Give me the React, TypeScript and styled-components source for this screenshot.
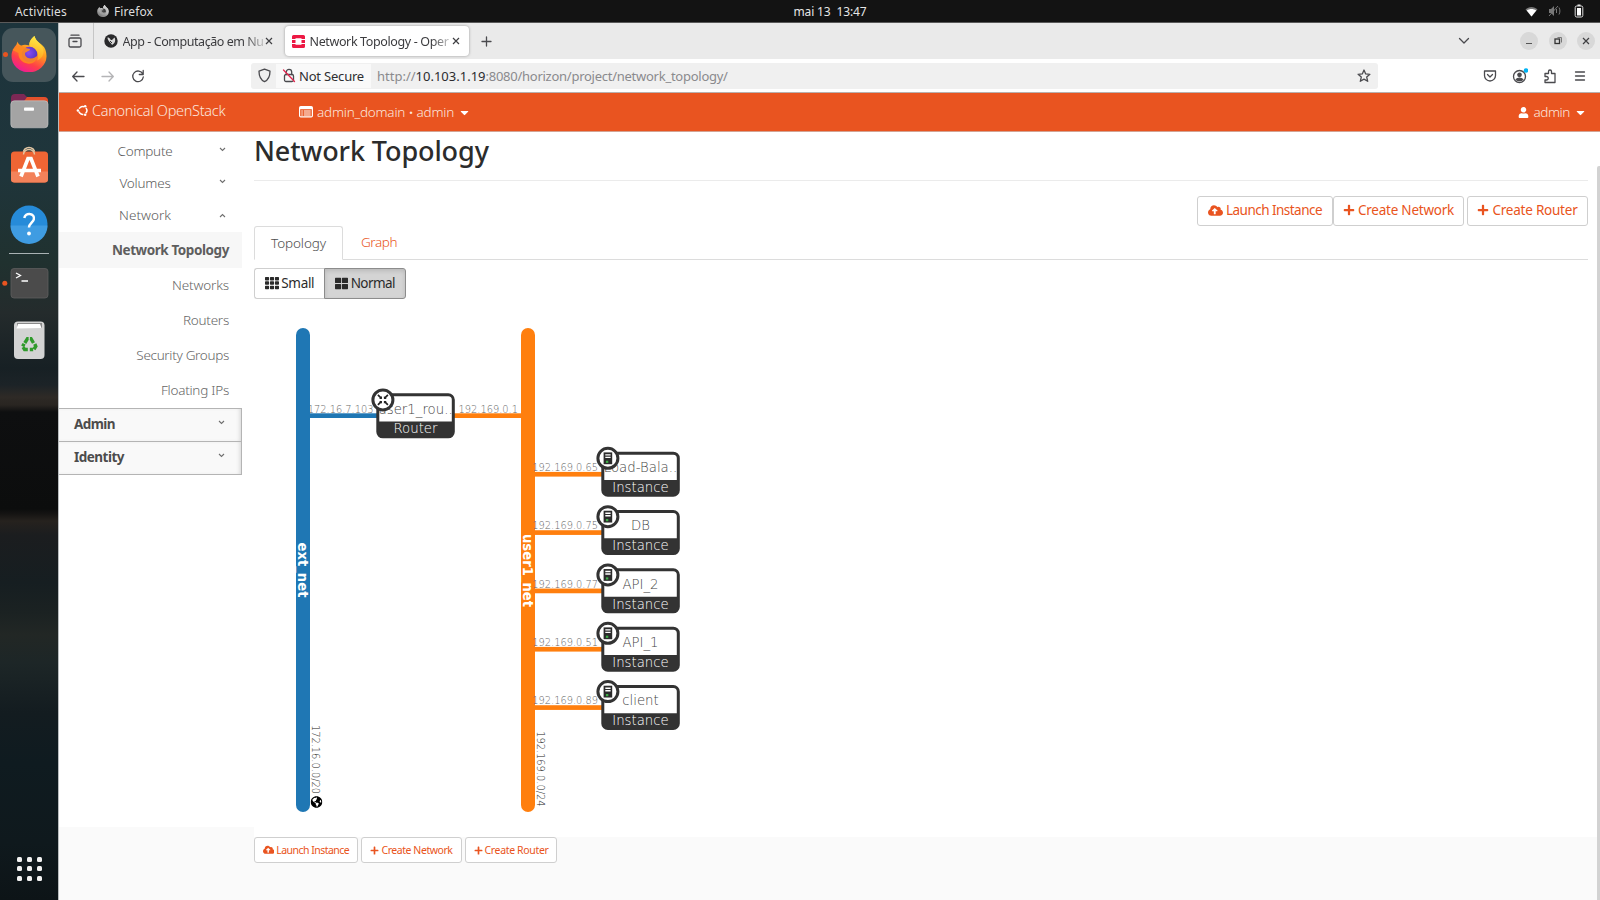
import React from "react";
import styled, { createGlobalStyle } from "styled-components";
import { FaCaretDown, FaCloudUploadAlt, FaGlobeAmericas, FaPlus, FaTh, FaThLarge, FaUser } from "react-icons/fa";

const ui = '"Noto Sans", "Open Sans", sans-serif';
const brand = "#e95420";

const GlobalStyle = createGlobalStyle`
  * { box-sizing: border-box; }
  body { margin: 0; background: #fafafa; font-family: ${ui}; overflow: hidden; }
  svg { display: block; flex: none; }
`;

const Desktop = styled.div`
  width: 1600px;
  height: 900px;
  display: flex;
  flex-direction: column;
  overflow: hidden;
`;

const Label = styled.span<{ $ls?: number }>`
  letter-spacing: ${(p) => p.$ls ?? 0}px;
  white-space: pre;
`;

/* ---------- system bar ---------- */

const SystemBar = styled.header`
  height: 23px;
  flex: none;
  background: #131313;
  border-bottom: 1px solid #5a5a5a;
  color: #dedede;
  font-size: 12px;
  display: grid;
  grid-template-columns: 1fr auto 1fr;
  align-items: center;
`;
const SystemLeft = styled.div`
  display: flex;
  align-items: center;
  padding-left: 15px;
`;
const AppMenu = styled.div`
  display: flex;
  align-items: center;
  gap: 5px;
  margin-left: 30px;
`;
const Clock = styled.div`
  margin-left: 60px;
  color: #e6e6e6;
`;
const SystemRight = styled.div`
  display: flex;
  justify-content: flex-end;
  align-items: center;
  gap: 10px;
  padding-right: 13px;
`;

/* ---------- dock ---------- */

const Workspace = styled.div`
  flex: 1;
  display: flex;
  min-height: 0;
`;
const Dock = styled.nav`
  width: 58px;
  flex: none;
  display: flex;
  flex-direction: column;
  padding-top: 5px;
  background: linear-gradient(
    180deg,
    #1d343c 0px, #1f353b 150px, #20312f 240px, #242b2c 290px, #172024 345px, #1c2327 362px,
    #2e2a26 374px, #292521 382px, #0e0f10 389px, #0c0d0d 486px, #151413 491px, #26221e 498px,
    #1b1d1f 512px, #161e21 560px, #1b2222 590px, #222725 612px, #1d2627 640px, #131c20 690px,
    #0f1b20 740px, #0f191d 820px, #0d1417 877px
  );
`;
const DockActive = styled.div`
  height: 54px;
  margin: 0 2px 0 2px;
  padding-bottom: 2px;
  border-radius: 11px;
  background: #46565b;
  display: flex;
  align-items: center;
  justify-content: center;
  position: relative;
`;
const RunDot = styled.i`
  position: absolute;
  left: 1px;
  top: 24px;
  width: 5px;
  height: 5px;
  border-radius: 50%;
  background: #e95420;
`;
const DockRule = styled.div`
  height: 1px;
  margin: 0 9px 1px;
  background: #a9b2b4;
`;
const AppGrid = styled.div`
  margin: auto 0 19px 16.5px;
  display: grid;
  grid-template-columns: repeat(3, 5px);
  gap: 4.6px 5px;
  i { height: 5px; border-radius: 1.5px; background: #f2f2f2; }
`;

/* ---------- browser chrome ---------- */

const Browser = styled.section`
  flex: 1;
  min-width: 0;
  display: flex;
  flex-direction: column;
  border-left: 1px solid #b8bcbe;
  background: #fafafa;
`;
const TabStrip = styled.div`
  height: 36px;
  flex: none;
  background: #eaeaea;
  display: flex;
  align-items: center;
  color: #3c3c3f;
  font-size: 12.5px;
`;
const TabHistory = styled.div`
  width: 35px;
  height: 36px;
  flex: none;
  border-right: 1px solid #c6c6c6;
  display: flex;
  align-items: center;
  justify-content: center;
  padding-right: 2px;
`;
const Tab = styled.div<{ $active?: boolean }>`
  height: 30px;
  width: ${(p) => (p.$active ? 184 : 185)}px;
  margin-left: ${(p) => (p.$active ? 1 : 5)}px;
  padding-left: ${(p) => (p.$active ? 7 : 5)}px;
  display: flex;
  align-items: center;
  border-radius: 4px;
  background: ${(p) => (p.$active ? "#fff" : "transparent")};
  box-shadow: ${(p) => (p.$active ? "0 0 3px rgba(0,0,0,.35)" : "none")};
`;
const TabTitle = styled.div`
  width: 140px;
  margin: 0 ${2}px 0 4.5px;
  white-space: nowrap;
  -webkit-mask-image: linear-gradient(90deg, #000 122px, rgba(0, 0, 0, 0.25) 140px);
  mask-image: linear-gradient(90deg, #000 122px, rgba(0, 0, 0, 0.25) 140px);
`;
const NewTab = styled.div`
  margin-left: 12px;
  flex: 1;
`;
const WindowControls = styled.div`
  display: flex;
  align-items: center;
  gap: 10.5px;
  padding: 0 5px 0 50px;
`;
const WindowButton = styled.div`
  width: 18px;
  height: 18px;
  border-radius: 50%;
  background: #d8d8d8;
  display: grid;
  place-items: center;
`;
const NavBar = styled.div`
  height: 34px;
  flex: none;
  background: #fff;
  border-bottom: 1px solid #b9b0ad;
  display: flex;
  align-items: center;
`;
const NavButtons = styled.div`
  display: flex;
  gap: 14px;
  padding-left: 11px;
  width: 192px;
`;
const UrlField = styled.div`
  width: 1127px;
  height: 26px;
  border-radius: 3px;
  background: #f0f0f0;
  display: flex;
  align-items: center;
  padding: 0 7px 0 6px;
  font-size: 13px;
  color: #8a8a8d;
`;
const Identity = styled.div`
  height: 24px;
  width: 95px;
  margin: 0 6px 0 4px;
  padding-left: 6px;
  display: flex;
  align-items: center;
  gap: 3px;
  background: #f9f9f9;
  color: #2e2e31;
`;
const UrlHost = styled(Label)`
  color: #2b2b2e;
`;
const UrlRest = styled(Label)`
  flex: 1;
`;
const NavTools = styled.div`
  flex: 1;
  display: flex;
  justify-content: flex-end;
  gap: 14px;
  padding-right: 12px;
`;

/* ---------- dashboard header ---------- */

const HorizonBar = styled.div`
  height: 39px;
  flex: none;
  background: ${brand};
  border-bottom: 1px solid #d3a393;
  color: #fbe6df;
  font-weight: 300;
  font-size: 13.5px;
  display: flex;
  align-items: center;
`;
const BrandLink = styled.div`
  width: 222px;
  padding: 0 0 4px 17px;
  display: flex;
  align-items: center;
  gap: 3px;
  font-size: 14.5px;
`;
const MenuLink = styled.div`
  display: flex;
  align-items: center;
  gap: 4px;
  padding-left: 18px;
  svg { color: #fff; }
`;
const UserLink = styled(MenuLink)`
  margin-left: auto;
  padding: 0 13px 0 0;
`;

/* ---------- page ---------- */

const Page = styled.div`
  flex: 1;
  min-height: 0;
  display: flex;
  align-items: flex-start;
`;
const Sidebar = styled.aside`
  width: 195px;
  height: 695px;
  flex: none;
  background: #fff;
  padding-top: 4px;
`;
const Group = styled.div`
  width: 183px;
  height: 32px;
  padding: 0 11px 2px 0;
  display: flex;
  align-items: center;
  justify-content: center;
  color: #5d5d5d;
  font-size: 13.5px;
  font-weight: 300;
  position: relative;
`;
const Chevron = styled.svg<{ $open?: boolean }>`
  position: absolute;
  right: 16px;
  top: ${(p) => (p.$open ? 13 : 11)}px;
  transform: rotate(${(p) => (p.$open ? 180 : 0)}deg);
`;
const Item = styled.div<{ $current?: boolean }>`
  width: 183px;
  height: ${(p) => (p.$current ? 36 : 35)}px;
  padding: 0 13px ${(p) => (p.$current ? 0 : 2)}px 0;
  display: flex;
  align-items: center;
  justify-content: flex-end;
  font-size: 13.5px;
  font-weight: ${(p) => (p.$current ? 700 : 300)};
  color: ${(p) => (p.$current ? "#5e5e5e" : "#666")};
  background: ${(p) => (p.$current ? "#f7f7f7" : "#fff")};
`;
const Section = styled.div`
  width: 183px;
  height: 33px;
  padding: 0 0 2px 15px;
  display: flex;
  align-items: center;
  position: relative;
  font-size: 13.5px;
  font-weight: 700;
  color: #4c4c4c;
  background: #f9f9f9;
  border: solid #b4b4b4;
  border-width: 1px 1px 0 0;
  box-shadow: inset -3px 0 4px -2px rgba(0, 0, 0, 0.15);
  &:last-child { border-bottom-width: 1px; height: 34px; }
`;

const Main = styled.main`
  width: 1334px;
  height: 100%;
  flex: none;
`;
const Panel = styled.div`
  height: 705px;
  background: #fff;
`;
const Gutter = styled.div`
  flex: 1;
  height: 705px;
  background: #fff;
  display: flex;
  align-items: flex-end;
  justify-content: flex-end;
`;
const ScrollThumb = styled.div`
  width: 3px;
  height: 734px;
  margin-bottom: -63px;
  border-radius: 2px 0 0 0;
  background: #d2d2d2;
`;
const Title = styled.h1`
  margin: 0;
  height: 48px;
  font-size: 27px;
  font-weight: 500;
  line-height: 37px;
  color: #2c2c2c;
`;
const TitleRule = styled.div`
  height: 1px;
  margin-bottom: 15px;
  background: #ebebeb;
`;
const Actions = styled.div`
  display: flex;
  justify-content: flex-end;
  height: 30px;
`;
const ActionButton = styled.button<{ $w: number; $gap?: number; $small?: boolean }>`
  width: ${(p) => p.$w}px;
  height: ${(p) => (p.$small ? 26 : 30)}px;
  margin: 0 0 0 ${(p) => p.$gap ?? 0}px;
  padding: 0 0 ${(p) => (p.$small ? 0 : 2)}px;
  display: flex;
  align-items: center;
  justify-content: center;
  gap: ${(p) => (p.$small ? 2 : 3)}px;
  font: 400 ${(p) => (p.$small ? 10.5 : 13.5)}px ${ui};
  color: ${brand};
  background: #fff;
  border: 1px solid #cfcfcf;
  border-radius: 3px;
`;
const Tabs = styled.div`
  display: flex;
  height: 34px;
  border-bottom: 1px solid #dcdcdc;
  font-size: 13.5px;
  font-weight: 300;
`;
const TopologyTab = styled.div`
  width: 89px;
  height: 34px;
  padding-bottom: 1px;
  border: 1px solid #dcdcdc;
  border-bottom-color: #fff;
  border-radius: 3px 3px 0 0;
  display: grid;
  place-items: center;
  color: #4e4e4e;
  background: #fff;
`;
const GraphTab = styled.div`
  padding: 7px 18px;
  color: ${brand};
  line-height: 19px;
`;
const SizeToggle = styled.div`
  display: flex;
  padding-top: 8px;
`;
const SizeButton = styled.button<{ $on?: boolean }>`
  width: ${(p) => (p.$on ? 82 : 70)}px;
  height: 31px;
  margin: 0;
  padding: 0 0 1px;
  display: flex;
  align-items: center;
  justify-content: center;
  gap: 2.5px;
  font: 400 13.5px ${ui};
  color: #2b2b2b;
  background: ${(p) => (p.$on ? "#d4d4d4" : "#fff")};
  border: 1px solid ${(p) => (p.$on ? "#8c8c8c" : "#cfcfcf")};
  border-right-width: ${(p) => (p.$on ? 1 : 0)}px;
  border-radius: ${(p) => (p.$on ? "0 3px 3px 0" : "3px 0 0 3px")};
  box-shadow: ${(p) => (p.$on ? "inset 0 2px 4px rgba(0,0,0,.13)" : "none")};
`;
const Footer = styled.div`
  display: flex;
`;

/* ---------- drawings ---------- */

function FirefoxIcon({ size, mono }: { size: number; mono?: boolean }) {
  const id = mono ? "m" : "c";
  return (
    <svg width={size} height={size} viewBox="0 0 36 36">
      <defs>
        <linearGradient id={`${id}a`} x1="0.8" y1="0" x2="0.3" y2="1">
          <stop offset="0" stopColor={mono ? "#fff" : "#ffe83a"} />
          <stop offset="0.4" stopColor={mono ? "#ccc" : "#ff9a1f"} />
          <stop offset="0.72" stopColor={mono ? "#999" : "#ff3f48"} />
          <stop offset="1" stopColor={mono ? "#777" : "#f0199a"} />
        </linearGradient>
        <linearGradient id={`${id}b`} x1="0.7" y1="0" x2="0.5" y2="1">
          <stop offset="0" stopColor={mono ? "#ddd" : "#fff14a"} />
          <stop offset="1" stopColor={mono ? "#aaa" : "#ffa01c"} />
        </linearGradient>
        <radialGradient id={`${id}c`} cx="0.45" cy="0.4">
          <stop offset="0" stopColor={mono ? "#555" : "#8b4bf2"} />
          <stop offset="1" stopColor={mono ? "#333" : "#5a37c8"} />
        </radialGradient>
      </defs>
      <path d="M5.500 8.500C3 11.500 0.500 15 0.500 20a17.500 16 0 0 0 35 0.500C35.600 15.500 34 11.500 31.500 9.500C28 6 24.500 5 23.500 0C20.500 2 18 6 18.500 9.500C15 8.500 12.500 8.500 10.500 9.500C9 9.500 6.500 7 6.500 5.500Z" fill={`url(#${id}a)`} />
      <path d="M23.500 0C19.500 3 17.500 7 18.700 10.500C23 11 27 15 27 20C27 22 26.500 23.500 26 24.500C30.500 23 32.800 19 32.500 14.500C31.500 8 25 6 23.500 0Z" fill={`url(#${id}b)`} />
      <circle cx="18.500" cy="18.500" r="7.800" fill={`url(#${id}c)`} />
      <path d="M1.500 14C4 10 9 9 13.500 11.500C15.500 12.500 18 12.200 19.200 13.500C18 15.500 14.500 15.500 14 17.500C13.700 19.500 16 22.500 19.500 22.500C23 22.500 25 20.500 26.300 20C25.500 25.500 21 28.500 16.500 27.500C10.500 26.500 7 22 7.500 17Z" fill={mono ? "#aaa" : "#ff8a1e"} opacity="0.9" />
    </svg>
  );
}

const DockIcons = () => (
  <>
    <svg width="58" height="57" viewBox="0 82 58 57">
      <path d="M11 98a4 4 0 0 1 4-4h9l3 3h17a4 4 0 0 1 4 4v8H11Z" fill="#7c2855" />
      <path d="M27 97h17a4 4 0 0 1 4 4v6H20Z" fill="#e2512b" />
      <rect x="10.800" y="100.800" width="37.200" height="27" rx="3.500" fill="#a4a4a4" stroke="#c9c9c9" strokeWidth="0.600" />
      <rect x="24" y="107.500" width="10" height="3.200" rx="0.800" fill="#fff" />
    </svg>
    <svg width="58" height="57" viewBox="0 139.500 58 57">
      <path d="M23.500 155v-2a5.500 5 0 0 1 11 0v2" fill="none" stroke="#e3c7a4" strokeWidth="1.700" />
      <rect x="11" y="152" width="37" height="31" rx="3.500" fill="#ef6534" />
      <path d="M11 172h37v7.500a3.500 3.500 0 0 1-3.500 3.500h-30a3.500 3.500 0 0 1-3.500-3.500Z" fill="#f3825a" />
      <path d="M23.500 155a5.500 5 0 0 1 11 0" fill="none" stroke="#e3c7a4" strokeWidth="1.500" />
      <path d="M21 177l7-18h3l7 18M18 171h23" fill="none" stroke="#fff" strokeWidth="3.700" />
    </svg>
    <svg width="58" height="57" viewBox="0.500 196.500 58 57">
      <circle cx="29.500" cy="224.500" r="18.500" fill="#268bd9" />
      <path d="M11 226a18.500 18.500 0 0 0 37 0Z" fill="#3f9ce2" />
      <path d="M24.800 218.500c.5-3 3-4.300 5.500-4 3.200.3 4.800 2.800 4 5.500-.9 3-4.800 4-4.800 8" fill="none" stroke="#fff" strokeWidth="2.500" />
      <circle cx="29.500" cy="234" r="1.900" fill="#fff" />
    </svg>
    <DockRule />
    <svg width="58" height="56" viewBox="0 255 58 56">
      <rect x="11" y="268.500" width="37" height="29.500" rx="3" fill="#4b4b4b" stroke="#5d5d5d" strokeWidth="0.800" />
      <path d="M16 273l4.500 2.500-4.500 2.500M21.500 281h6.500" fill="none" stroke="#fff" strokeWidth="1.300" />
      <circle cx="4.800" cy="283.300" r="2.500" fill="#e95420" />
    </svg>
    <svg width="58" height="57" viewBox="0 311 58 57">
      <rect x="14" y="321.500" width="30.500" height="37.500" rx="4" fill="#d3d3d3" />
      <path d="M17 323h25v5H17Z" fill="#8a8a8a" />
      <path d="M18 324h22l1.500 4-25 .5Z" fill="#fff" />
      <g fill="none" stroke="#2f9a2b" strokeWidth="3.400">
        <path d="M24.800 343l2.700-4.300h3.500l2.500 4.300" strokeDasharray="6.200 1.300" />
        <path d="M34.800 344l1 2.300-2 3.200h-4" strokeDasharray="6 .900" />
        <path d="M27.800 349.500h-3.200l-2-3 1.500-2.800" strokeDasharray="6 .900" />
      </g>
    </svg>
  </>
);

const Close = ({ s = 8 }: { s?: number }) => (
  <svg width={s} height={s} viewBox="0 0 8 8" stroke="#3f3f42" strokeWidth="1.200">
    <path d="M1 1l6 6M7 1l-6 6" />
  </svg>
);

const line = { fill: "none", stroke: "#4a4a4e", strokeWidth: 1.3, strokeLinecap: "round", strokeLinejoin: "round" } as const;

const Down = ({ open }: { open?: boolean }) => (
  <Chevron $open={open} width="7" height="5" viewBox="0 0 7 5" fill="none" stroke="#6f6f6f" strokeWidth="1.100">
    <path d="M1 1l2.500 2.500L6 1" />
  </Chevron>
);

const UbuntuMark = () => (
  <svg width="13" height="13" viewBox="0 0 13 13" fill="none" stroke="#fff">
    <circle cx="6.800" cy="6.500" r="4" strokeWidth="1.500" strokeDasharray="5.700 2.678" transform="rotate(-40.800 6.800 6.500)" />
    <g fill="#fff" stroke="none">
      <circle cx="1.900" cy="6.500" r="1.250" />
      <circle cx="9.200" cy="2.200" r="1.250" />
      <circle cx="9.200" cy="10.800" r="1.250" />
    </g>
  </svg>
);

const ProjectIcon = () => (
  <svg width="14" height="12" viewBox="0 0 14 12">
    <rect x="0.600" y="0.600" width="12.800" height="10.300" rx="1.200" fill="none" stroke="#fff" strokeWidth="1.200" />
    <path d="M1 1h12v2.200H1Z" fill="#fff" />
    <path d="M2.300 5h1.500M2.300 7h1.500M2.300 9h1.500M4.800 5h6.900M4.800 7h6.900M4.800 9h6.900" stroke="#fff" strokeWidth="1" />
  </svg>
);

/* ---------- topology diagram ---------- */

const dark = "#333";
const thin = { fontFamily: '"DejaVu Sans Light", "DejaVu Sans", sans-serif', fontWeight: 200 } as const;

function Device({ x, y, name, kind, router }: { x: number; y: number; name: string; kind: string; router?: boolean }) {
  return (
    <g transform={`translate(${x} ${y})`}>
      <rect x="1.500" y="1.500" width="75.500" height="42" rx="5" fill="#fff" stroke={dark} strokeWidth="3" />
      <path d="M1.500 28.300h75.500V39a4.500 4.500 0 0 1-4.500 4.500H6A4.500 4.500 0 0 1 1.500 39Z" fill={dark} />
      <text {...thin} x="39.200" y="20.300" fontSize="13.300" textAnchor="middle" fill="#444">{name}</text>
      <text {...thin} x="39.200" y="40.200" fontSize="13.300" textAnchor="middle" fill="#fff">{kind}</text>
      <circle cx="6.600" cy="6.600" r="10" fill="#fff" stroke={dark} strokeWidth="3" />
      {router ? (
        <g transform="translate(6.600 6.600)" fill="#222" stroke="#222" strokeWidth="1.700">
          <path d="M-5-5l3.500 3.500M5-5l-3.500 3.500M-5 5l3.500-3.500M5 5l-3.500-3.500" />
          <path d="M-1-1v-2.800l-2.800 2.800ZM1-1v-2.800l2.800 2.800ZM-1 1v2.800l-2.800-2.800ZM1 1v2.800l2.800-2.800Z" stroke="none" />
        </g>
      ) : (
        <g>
          <rect x="2.300" y="0.700" width="8.600" height="11.800" fill="#2b2b2b" />
          <path d="M4 3.200h5.300M4 5.700h5.300" stroke="#fff" strokeWidth="1.400" />
          <rect x="4.600" y="9" width="2.400" height="2.200" fill="#3fae49" />
        </g>
      )}
    </g>
  );
}

const instances = [
  { name: "Load-Bala..", ip: "192.169.0.65" },
  { name: "DB", ip: "192.169.0.75" },
  { name: "API_2", ip: "192.169.0.77" },
  { name: "API_1", ip: "192.169.0.51" },
  { name: "client", ip: "192.169.0.89" },
];

const Topology = () => (
  <svg width="1334" height="538" viewBox="254 299 1334 538">
    <text {...thin} fontSize="9.850" fill="#666" x="373.500" y="412.700" textAnchor="end">172.16.7.103</text>
    <rect x="296" y="328" width="14" height="484" rx="7" fill="#1f77b4" />
    <rect x="521" y="328" width="14" height="484" rx="7" fill="#ff7f0e" />
    <rect x="309" y="413.300" width="69" height="4.700" fill="#1f77b4" />
    <rect x="453" y="413.300" width="69" height="4.700" fill="#ff7f0e" />
    <text {...thin} fontSize="9.850" fill="#666" x="458.500" y="412.700">192.169.0.1</text>
    <Device x={376.300} y={393.300} name="user1_rou.." kind="Router" router />
    {instances.map((d, i) => {
      const y = 451.700 + i * 58.330;
      return (
        <g key={d.name}>
          <rect x="534" y={y + 20.200} width="69" height="4.700" fill="#ff7f0e" />
          <text {...thin} x="598" y={y + 19.400} fontSize="9.850" textAnchor="end" fill="#666">{d.ip}</text>
          <Device x={601.300} y={y} name={d.name} kind="Instance" />
        </g>
      );
    })}
    <g fontFamily="DejaVu Sans, sans-serif" fontWeight="700" fontSize="13.200" fill="#fff" textAnchor="middle">
      <text transform="translate(298 570) rotate(90)">ext_net</text>
      <text transform="translate(523 570.500) rotate(90)">user1_net</text>
    </g>
    <g {...thin} fontSize="9.850" fill="#222" textAnchor="end">
      <text transform="translate(311.700 794) rotate(90)">172.16.0.0/20</text>
      <text transform="translate(536.700 806.500) rotate(90)">192.169.0.0/24</text>
    </g>
    <FaGlobeAmericas x={310.500} y={796} size={12} color="#000" />
  </svg>
);

const ActionSet = ({ small }: { small?: boolean }) => {
  const up = small ? 11.5 : 15;
  const plus = small ? 9 : 12;
  return (
    <>
      <ActionButton $small={small} $w={small ? 104 : 136}>
        <FaCloudUploadAlt size={up} /><Label $ls={small ? -0.52 : -0.53}>Launch Instance</Label>
      </ActionButton>
      <ActionButton $small={small} $w={small ? 101 : 131} $gap={small ? 3 : 0}>
        <FaPlus size={plus} /><Label $ls={small ? -0.44 : -0.23}>Create Network</Label>
      </ActionButton>
      <ActionButton $small={small} $w={small ? 92 : 121} $gap={3}>
        <FaPlus size={plus} /><Label $ls={small ? -0.35 : -0.23}>Create Router</Label>
      </ActionButton>
    </>
  );
};

export default function App() {
  return (
    <Desktop>
      <GlobalStyle />
      <SystemBar>
        <SystemLeft>
          <Label $ls={0.2}>Activities</Label>
          <AppMenu><FirefoxIcon size={12} mono /><Label $ls={0.1}>Firefox</Label></AppMenu>
        </SystemLeft>
        <Clock><Label $ls={-0.14}>mai 13  13:47</Label></Clock>
        <SystemRight>
          <svg width="13" height="11" viewBox="0 0 13 11"><path d="M0.500 3.500C3.500 0 9.500 0 12.500 3.500L6.500 10.500Z" fill="#777" /><path d="M1.800 4.500C4.500 2.500 8.500 2.500 11.200 4.500L6.500 10.500Z" fill="#fff" /></svg>
          <svg width="13" height="12" viewBox="0 0 13 12"><path d="M1 4h2l3-3v10l-3-3H1Z" fill="#777" /><path d="M1 11L10 1M8.500 4v4M11 2.500c1.200 2 1.200 5 0 7" stroke="#777" fill="none" /></svg>
          <svg width="16" height="14" viewBox="0 0 16 14"><path d="M6.500 0.500h3v1.500h-3z" fill="#eee" /><rect x="4.200" y="2" width="7.600" height="11" rx="1.500" fill="none" stroke="#ddd" /><rect x="6" y="4" width="4" height="7.500" fill="#fff" /></svg>
        </SystemRight>
      </SystemBar>

      <Workspace>
        <Dock>
          <DockActive><RunDot /><FirefoxIcon size={36} /></DockActive>
          <DockIcons />
          <AppGrid>{Array.from({ length: 9 }, (_, i) => <i key={i} />)}</AppGrid>
        </Dock>

        <Browser>
          <TabStrip>
            <TabHistory>
              <svg width="14" height="14" viewBox="0 0 14 14" {...line}><rect x="1" y="4" width="12" height="9" rx="1.500" /><path d="M3 1.200h8M5 7.500h4" /></svg>
            </TabHistory>
            <Tab>
              <svg width="14" height="14" viewBox="0 0 14 14"><circle cx="7" cy="7" r="6.700" fill="#2a2a2c" /><path d="M3.500 3.500c3 0 2.500 3 4.500 2.500l2.500-2.500c1.500 3 .5 6-2.500 7.500-1-2.500-4.500-4-4.500-7.500Z" fill="#d8d8d8" /><path d="M6 7l2 2" stroke="#2a2a2c" /></svg>
              <TabTitle><Label $ls={-0.45}>App - Computação em Nu</Label></TabTitle>
              <Close />
            </Tab>
            <Tab $active>
              <svg width="13" height="13" viewBox="0 0 13 13"><path d="M1.500 0h10A1.500 1.500 0 0 1 13 1.500V4H9.500V3.300h-6V4H0V1.500A1.500 1.500 0 0 1 1.500 0ZM0 5h3.500v3H0ZM9.500 5H13v3H9.500ZM0 9h3.500v.700h6V9H13v2.500a1.500 1.500 0 0 1-1.500 1.500h-10A1.500 1.500 0 0 1 0 11.500Z" fill="#ed1944" /></svg>
              <TabTitle><Label $ls={-0.37}>Network Topology - Oper</Label></TabTitle>
              <Close />
            </Tab>
            <NewTab><svg width="11" height="11" viewBox="0 0 11 11" {...line}><path d="M5.500 1v9M1 5.500h9" /></svg></NewTab>
            <svg width="12" height="8" viewBox="0 0 12 8" {...line}><path d="M1.500 1.500L6 6l4.500-4.500" /></svg>
            <WindowControls>
              <WindowButton><svg width="8" height="8" viewBox="0 0 8 8" stroke="#555"><path d="M1 6.500h6" /></svg></WindowButton>
              <WindowButton><svg width="8" height="8" viewBox="0 0 8 8" fill="none" stroke="#333"><rect x="1" y="2" width="4.500" height="4.500" strokeWidth="1.300" /><path d="M3.500 .5H7.500v5" stroke="#777" /></svg></WindowButton>
              <WindowButton><Close /></WindowButton>
            </WindowControls>
          </TabStrip>

          <NavBar>
            <NavButtons>
              <svg width="16" height="16" viewBox="0 0 16 16" {...line}><path d="M3 8.500h11M7 4L2.700 8.500 7 13" /></svg>
              <svg width="16" height="16" viewBox="0 0 16 16" {...line} stroke="#b4b4b6"><path d="M2 8.500h11M9 4l4.300 4.500L9 13" /></svg>
              <svg width="16" height="16" viewBox="0 0 16 16" {...line}><path d="M12.800 6A5.300 5.300 0 1 0 13.300 9M13.200 2.500v4H9.300" /></svg>
            </NavButtons>
            <UrlField>
              <svg width="15" height="15" viewBox="0 0 15 15" {...line}><path d="M7.500 1.200l5.500 2c0 5-1.500 8.500-5.500 10.500C3.500 11.700 2 8.200 2 3.200Z" /></svg>
              <Identity>
                <svg width="14" height="15" viewBox="0 0 14 15" {...line}><rect x="2.500" y="6.500" width="9" height="7" rx="1.500" /><path d="M4.300 6.500V4a2.700 2.700 0 0 1 5.400 0v2.500" /><path d="M1.500 2l11 11.500" stroke="#e22850" /></svg>
                <Label $ls={-0.2}>Not Secure</Label>
              </Identity>
              <Label>http://</Label><UrlHost>10.103.1.19</UrlHost><UrlRest $ls={-0.26}>:8080/horizon/project/network_topology/</UrlRest>
              <svg width="14" height="14" viewBox="0 0 14 14" {...line}><path d="M7 1l1.700 3.900 4.200.4-3.200 2.800 1 4.200L7 10.100l-3.700 2.200 1-4.200L1.100 5.300l4.200-.4Z" /></svg>
            </UrlField>
            <NavTools>
              <svg width="16" height="16" viewBox="0 0 16 16" {...line}><path d="M2.500 3h11v4.500a5.500 5.500 0 0 1-11 0ZM5.500 6.500L8 9l2.500-2.500" /></svg>
              <svg width="16" height="16" viewBox="0 0 16 16" {...line}><circle cx="7.500" cy="8.500" r="6" /><circle cx="7.500" cy="6.800" r="1.700" fill="#4a4a4e" /><path d="M4.200 11.500c1.500-1.800 5-1.800 6.600 0-1.600 1.600-5 1.600-6.600 0Z" fill="#4a4a4e" /><circle cx="14" cy="2.500" r="2.300" fill="#00b3f4" stroke="none" /></svg>
              <svg width="16" height="16" viewBox="0 0 16 16" {...line}><path d="M3 5.500h3.500V3.500a1.500 1.500 0 0 1 3 0v2H13v9H3V12h1.500a1.500 1.500 0 0 0 0-3.500H3Z" /></svg>
              <svg width="16" height="16" viewBox="0 0 16 16" {...line}><path d="M3.500 4h9M3.500 8h9M3.500 12h9" /></svg>
            </NavTools>
          </NavBar>

          <HorizonBar>
            <BrandLink><UbuntuMark /><Label $ls={-0.3}>Canonical OpenStack</Label></BrandLink>
            <MenuLink><ProjectIcon /><Label $ls={-0.22}>admin_domain • admin</Label><FaCaretDown size={13} /></MenuLink>
            <UserLink><FaUser size={11} /><Label $ls={-0.4}>admin</Label><FaCaretDown size={13} /></UserLink>
          </HorizonBar>

          <Page>
            <Sidebar>
              <Group><Label $ls={-0.23}>Compute</Label><Down /></Group>
              <Group><Label $ls={-0.2}>Volumes</Label><Down /></Group>
              <Group><Label>Network</Label><Down open /></Group>
              <Item $current><Label $ls={-0.42}>Network Topology</Label></Item>
              <Item><Label $ls={-0.14}>Networks</Label></Item>
              <Item><Label $ls={-0.26}>Routers</Label></Item>
              <Item><Label $ls={-0.32}>Security Groups</Label></Item>
              <Item><Label $ls={-0.25}>Floating IPs</Label></Item>
              <Section><Label $ls={-0.6}>Admin</Label><Down /></Section>
              <Section><Label $ls={-0.5}>Identity</Label><Down /></Section>
            </Sidebar>

            <Main>
              <Panel>
                <Title><Label $ls={-0.1}>Network Topology</Label></Title>
                <TitleRule />
                <Actions><ActionSet /></Actions>
                <Tabs>
                  <TopologyTab><Label $ls={-0.1}>Topology</Label></TopologyTab>
                  <GraphTab><Label $ls={-0.4}>Graph</Label></GraphTab>
                </Tabs>
                <SizeToggle>
                  <SizeButton><FaTh size={14} /><Label $ls={-0.3}>Small</Label></SizeButton>
                  <SizeButton $on><FaThLarge size={13} /><Label $ls={-0.6}>Normal</Label></SizeButton>
                </SizeToggle>
                <Topology />
              </Panel>
              <Footer><ActionSet small /></Footer>
            </Main>
            <Gutter><ScrollThumb /></Gutter>
          </Page>
        </Browser>
      </Workspace>
    </Desktop>
  );
}
